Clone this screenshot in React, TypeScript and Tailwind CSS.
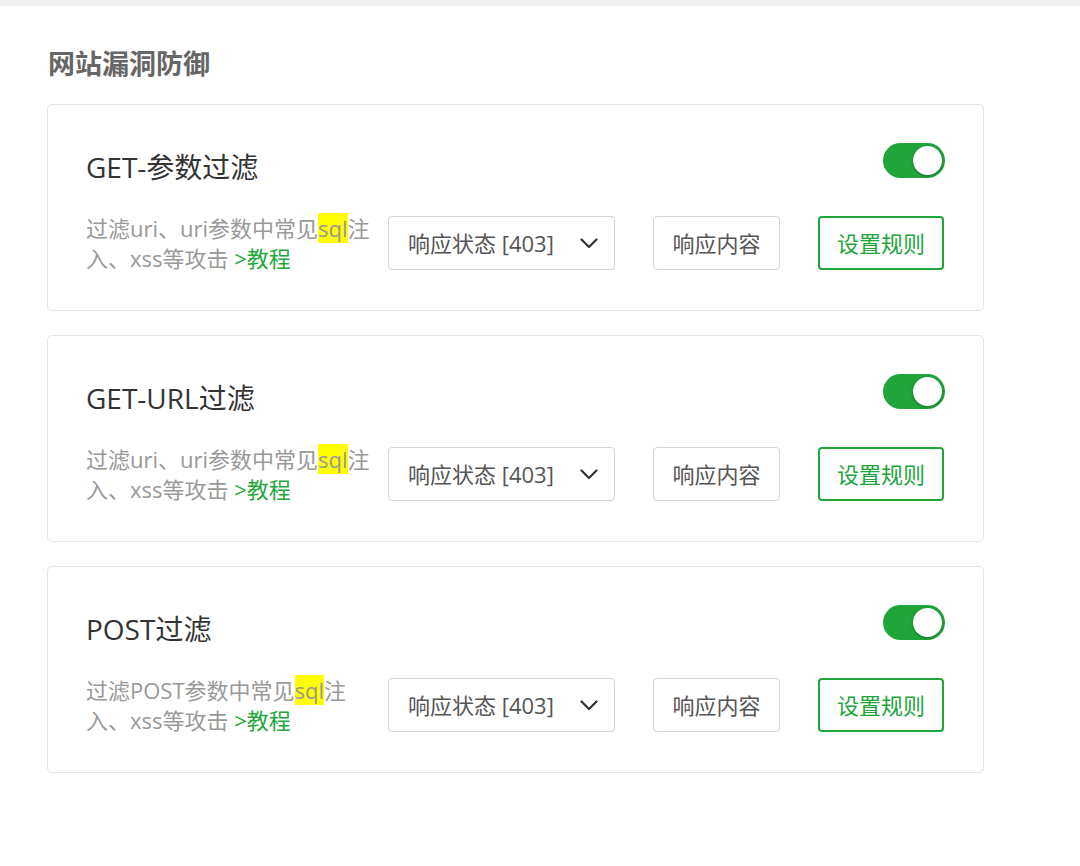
const FONT = "font-['Open_Sans','Noto_Sans_CJK_SC',sans-serif]";

type Rule = {
  title: string;
  lead: string;
  tail: string;
};

// description wraps after "注" in every card
const rules: Rule[] = [
  { title: "GET-参数过滤", lead: "过滤uri、uri参数中常见", tail: "入、xss等攻击" },
  { title: "GET-URL过滤", lead: "过滤uri、uri参数中常见", tail: "入、xss等攻击" },
  { title: "POST过滤", lead: "过滤POST参数中常见", tail: "入、xss等攻击" },
];

function Toggle() {
  return (
    <div className="flex h-[35px] w-[62px] items-center justify-end rounded-full bg-[#20a53a] px-[3px]">
      <div className="h-[29px] w-[29px] rounded-full bg-white shadow-[0_1px_3px_rgba(0,0,0,0.35)]" />
    </div>
  );
}

function Chevron() {
  return (
    <svg width="18" height="11" viewBox="0 0 18 11" fill="none">
      <path d="M1.5 1.5 L9 9 L16.5 1.5" stroke="#333" strokeWidth="2.2" strokeLinecap="round" strokeLinejoin="round" />
    </svg>
  );
}

function RuleCard({ rule }: { rule: Rule }) {
  return (
    <div className="rounded-[5px] border border-[#e6e6e6] bg-white px-[38px] pb-[37px] pt-[38px]">
      <div className="flex items-start justify-between">
        <div className="mt-[6px] text-[28px] leading-[36px] text-[#333]">{rule.title}</div>
        <Toggle />
      </div>
      <div className="mt-[28px] flex items-center">
        <div className="w-[290px] whitespace-nowrap text-[22px] leading-[30px] text-[#999]">
          <div>
            {rule.lead}
            <span className="bg-[#ffff00]">sql</span>注
          </div>
          <div>
            {rule.tail} <span className="text-[#22a83c]">&gt;教程</span>
          </div>
        </div>
        <div className="ml-[12px] flex h-[54px] w-[227px] items-center justify-between rounded-[4px] border border-[#d4d4d4] pl-[19px] pr-[16px] text-[22px] text-[#555]">
          <span>响应状态 [403]</span>
          <Chevron />
        </div>
        <div className="ml-[38px] flex h-[54px] w-[127px] items-center justify-center rounded-[4px] border border-[#d4d4d4] text-[22px] text-[#555]">
          响应内容
        </div>
        <div className="ml-[38px] flex h-[54px] w-[126px] items-center justify-center rounded-[4px] border-2 border-[#20a53a] text-[22px] text-[#20a53a]">
          设置规则
        </div>
      </div>
    </div>
  );
}

export default function App() {
  return (
    <div className={`min-h-[866px] w-[1080px] bg-white ${FONT}`}>
      <div className="h-[6px] bg-[#f0f0f0]" />
      <div className="pl-[47px] pt-[42px]">
        <h2 className="pl-[1px] text-[27px] font-bold leading-[32px] text-[#666]">网站漏洞防御</h2>
        <div className="mt-[24px] flex w-[937px] flex-col gap-[24px]">
          {rules.map((r) => (
            <RuleCard key={r.title} rule={r} />
          ))}
        </div>
      </div>
    </div>
  );
}
